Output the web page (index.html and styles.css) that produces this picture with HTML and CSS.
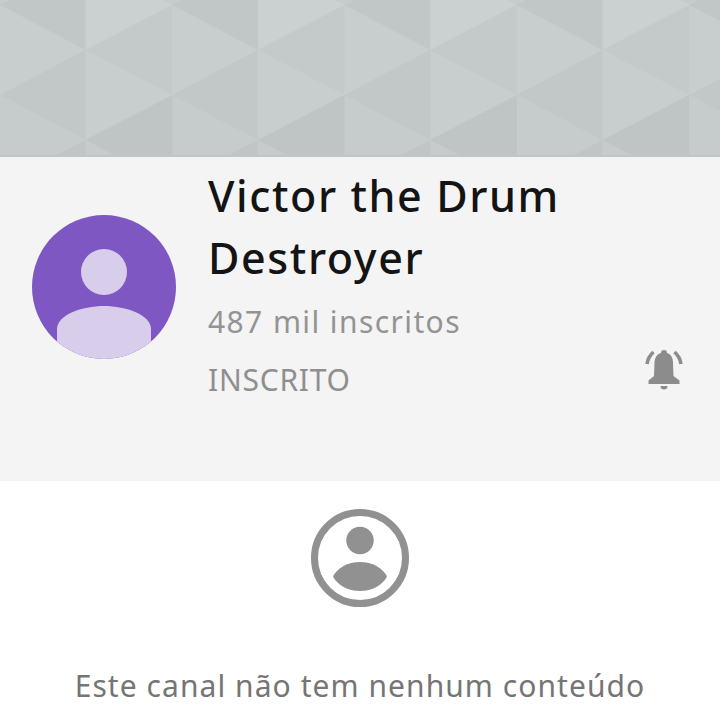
FILE: index.html
```html
<!DOCTYPE html>
<html lang="pt">
<head>
    <meta charset="UTF-8">
    <meta name="viewport" content="width=device-width, initial-scale=1.0">
    <title>Victor the Drum Destroyer</title>
    <link rel="stylesheet" href="styles.css">
</head>
<body>
    <div class="banner">
        <svg class="banner-art" width="720" height="157" viewBox="0 0 720 157">
            <defs>
                <pattern id="tiles" patternUnits="userSpaceOnUse" width="172.3" height="157">
                    <rect width="172.3" height="157" fill="#c6cccb"/>
                    <polygon points="0,5 85.5,50 85.5,-40" fill="#c1c7c7"/>
                    <polygon points="0,5 85.5,50 0,95" fill="#c8cecd"/>
                    <polygon points="0,95 85.5,50 85.5,140" fill="#c2c8c7"/>
                    <polygon points="0,95 85.5,140 0,185" fill="#c6cccb"/>
                    <polygon points="85.5,140 0,185 85.5,230" fill="#c0c6c5"/>
                    <polygon points="85.5,-40 172.3,5 85.5,50" fill="#cbd1d1"/>
                    <polygon points="85.5,50 172.3,5 172.3,95" fill="#c4cac9"/>
                    <polygon points="85.5,50 172.3,95 85.5,140" fill="#c8cecd"/>
                    <polygon points="85.5,140 172.3,95 172.3,185" fill="#bfc5c4"/>
                    <polygon points="85.5,140 172.3,185 85.5,230" fill="#c6cccb"/>
                </pattern>
            </defs>
            <rect width="720" height="157" fill="url(#tiles)"/>
            <rect y="155" width="720" height="2" fill="#c0c5c5"/>
        </svg>
    </div>

    <div class="channel">
        <svg class="avatar" width="144" height="144" viewBox="0 0 144 144">
            <clipPath id="avatarClip"><circle cx="72" cy="72" r="72"/></clipPath>
            <circle cx="72" cy="72" r="72" fill="#7e57c2"/>
            <circle cx="72" cy="57" r="23" fill="#d9cdec"/>
            <path d="M25 144 V114 C25 100 50 91 72 91 C94 91 119 100 119 114 V144 Z" fill="#d9cdec" clip-path="url(#avatarClip)"/>
        </svg>
        <div class="channel-info">
            <h1 class="channel-name">Victor the Drum Destroyer</h1>
            <p class="subscribers">487 mil inscritos</p>
            <p class="subscribed">INSCRITO</p>
        </div>
        <svg class="bell" width="38" height="42" viewBox="0 0 38 42">
            <path d="M19 2 a3 3 0 0 1 3 3 C26 6 28 10 28 15 L28.5 28 L34.5 32.5 V36 H3.5 V32.5 L9 28 L9.5 15 C9.5 10 12 6 16 5 a3 3 0 0 1 3 -3 Z" fill="#8c8c8c"/>
            <path d="M15.5 38 h7 a3.5 3.5 0 0 1 -7 0 Z" fill="#8c8c8c"/>
            <path d="M2 16 C2.8 11 5 7 8.5 4 M36 16 C35.2 11 33 7 29.5 4" fill="none" stroke="#8c8c8c" stroke-width="3.6"/>
        </svg>
    </div>

    <div class="empty">
        <svg class="empty-icon" width="100" height="100" viewBox="0 0 100 100">
            <circle cx="50" cy="50" r="45.5" fill="none" stroke="#919191" stroke-width="7"/>
            <circle cx="50" cy="32.5" r="13.7" fill="#919191"/>
            <path d="M23 68.5 C27 60 38 54 50 54 C62 54 73 60 77 68.5 C73 77 62 83 50 83 C38 83 27 77 23 68.5 Z" fill="#919191"/>
        </svg>
        <p class="empty-text">Este canal não tem nenhum conteúdo</p>
    </div>
</body>
</html>
```

FILE: styles.css
```css
html, body {
    height: 720px;
    overflow: hidden;
}

body {
    margin: 0;
    background-color: #fff;
    font-family: "Noto Sans", sans-serif;
}

.banner {
    height: 157px;
}

.banner-art {
    display: block;
}

.channel {
    display: flex;
    align-items: flex-start;
    box-sizing: border-box;
    height: 324px;
    padding-left: 32px;
    background-color: #f4f4f4;
}

.avatar {
    flex: none;
    margin-top: 58px;
}

.channel-info {
    width: 400px;
    margin-left: 32px;
}

.channel-name {
    margin: 8px 0 0;
    font-size: 43px;
    font-weight: 500;
    line-height: 62px;
    letter-spacing: 1.6px;
    color: #141414;
}

.subscribers {
    margin: 13px 0 0;
    font-size: 30px;
    line-height: 40px;
    letter-spacing: 1.4px;
    color: #939393;
}

.subscribed {
    margin: 18px 0 0;
    font-size: 30px;
    line-height: 40px;
    letter-spacing: 0.75px;
    color: #8f8f8f;
}

.bell {
    flex: none;
    margin-top: 191px;
    margin-left: 37px;
}

.empty {
    display: flex;
    flex-direction: column;
    align-items: center;
    padding-top: 27px;
}

.empty-text {
    margin: 58px 0 0;
    font-size: 30px;
    line-height: 40px;
    letter-spacing: 1.06px;
    white-space: nowrap;
    color: #757575;
}
```
